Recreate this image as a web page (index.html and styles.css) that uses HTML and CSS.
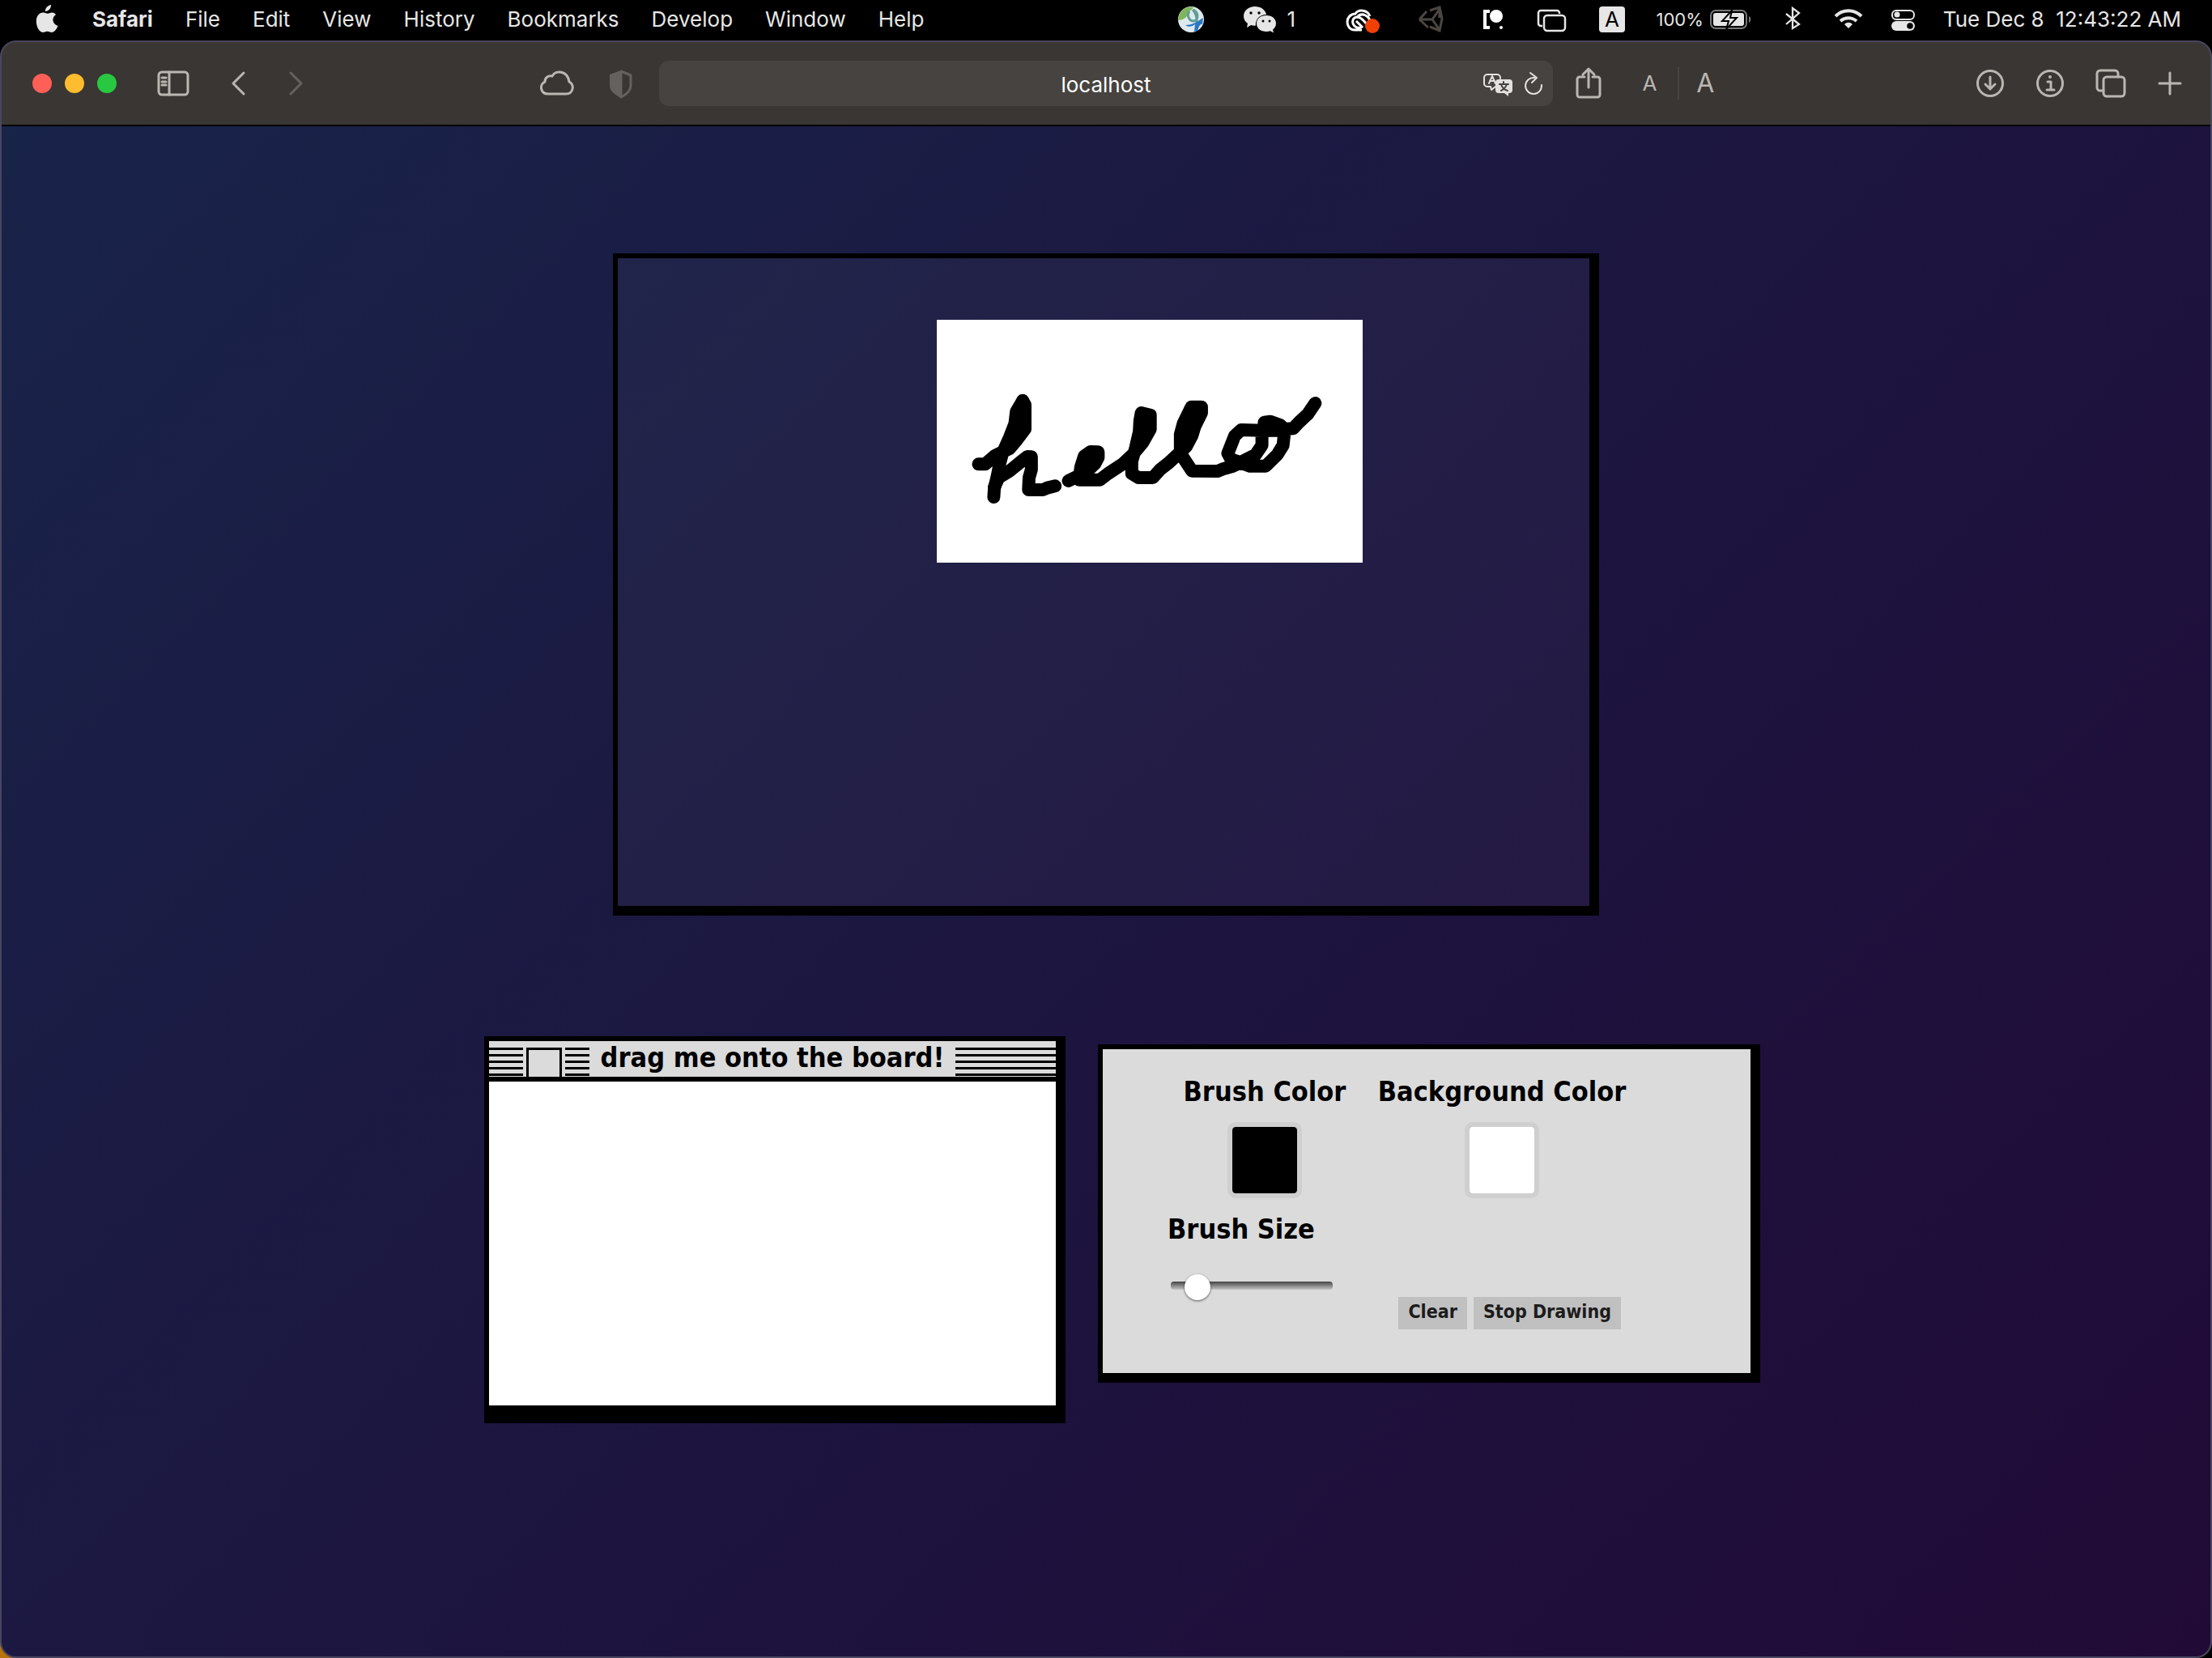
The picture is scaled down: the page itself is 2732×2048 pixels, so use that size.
FILE: index.html
```html
<!DOCTYPE html>
<html lang="en">
<head>
<meta charset="utf-8">
<title>localhost</title>
<meta name="viewport" content="width=device-width, initial-scale=1">
<link rel="stylesheet" href="styles.css">
</head>
<body>
<header class="menubar">
  <nav class="menus">
    <svg class="apple" width="28" height="36" viewBox="0 0 28 36"><path d="M19 0c.4 4-3 8-7 8-.4-4 3.200-7.400 7-8zM25 12c-6 4-4 12 2.500 14-1.500 4-4.500 8-7.500 8-2.200 0-3-1.300-5.500-1.300S11 34 9 34C4 34 0 25 1 18c.8-6 5-9 9-8.500 2 .2 3 1.300 4.800 1.300S18 9.500 20 9.500c2 0 3.800.8 5 2.500z"/></svg>
    <button class="strong">Safari</button>
    <button>File</button>
    <button>Edit</button>
    <button>View</button>
    <button>History</button>
    <button>Bookmarks</button>
    <button>Develop</button>
    <button>Window</button>
    <button>Help</button>
  </nav>
  <div class="status">
    <svg width="56" height="48" viewBox="0 0 56 48"><circle cx="28" cy="24" r="16" fill="#dfe8ee"/><path d="M13 20C16 10 25 7 31 9c-2 4-5 4-8 8 2 3-4 8-11 8z" fill="#7fb65b"/><path d="M26 14c-4 5 0 12 5 12s8-9 0-14M30 12c5 4 6 12 5 24" fill="none" stroke="#5f9f95" stroke-width="3"/><path d="M21 31c8 0 13-3 22-9l-1 8c-3-1-4 3-6 8l-4 1 1-9c-4 3-8 4-12 1z" fill="#2678c4"/></svg>
    <span class="chat"><svg width="42" height="48" viewBox="0 0 42 48" fill="#e6e6e6"><path d="M15 8C7 8 1 13 1 20c0 4 2 7 5 9l-1 5 5-3c2 .6 4 .8 6 .6C15 25 20 18 29 18 28 12 22 8 15 8z"/><path d="M29 19c-7 0-12 4-12 10s5 10 12 10c2 0 3-.3 5-.8l4 2.300-1-4c2-1.500 4-4 4-7.500 0-6-5-10-12-10z"/><g fill="#000"><circle cx="10" cy="16" r="1.700"/><circle cx="20" cy="16" r="1.700"/><circle cx="25" cy="26" r="1.500"/><circle cx="33" cy="26" r="1.500"/></g></svg>1</span>
    <svg width="60" height="48" viewBox="0 0 60 48" fill="none" stroke="#fff" stroke-width="3"><path d="M29 37h-9c-6 0-9-5-9-10s4-10 10-10c4-6 15-5 18 3M30 33c-12 6-17-11-7-12 6 0 9 6 14 11M22 26l8 8M24 20c6-5 13 0 15 5"/><circle cx="42" cy="32" r="9" fill="#f04005" stroke="none"/></svg>
    <svg width="44" height="48" viewBox="0 0 44 48" fill="none" stroke="#4b4642" stroke-width="3"><path d="M8 24L17 14M33 10v12M21 13l12-4 3 14-3 15-12-5M8 24l11 10M10 24h14l9-13M24 24l9 13"/></svg>
    <svg width="44" height="48" viewBox="0 0 44 48"><path d="M19 14h-6v20h6" fill="none" stroke="#fff" stroke-width="4"/><circle cx="27" cy="20" r="8" fill="#fff"/><circle cx="33" cy="34" r="2" fill="#fff"/></svg>
    <svg width="40" height="48" viewBox="0 0 40 48" fill="none" stroke="#e6e6e6" stroke-width="2.500"><path d="M8 32H6a3 3 0 0 1-3-3V16a3 3 0 0 1 3-3h20a3 3 0 0 1 3 3v1"/><rect x="10" y="19" width="26" height="19" rx="4"/></svg>
    <svg width="44" height="48" viewBox="0 0 44 48"><rect x="6" y="8" width="32" height="32" rx="4" fill="#e6e6e6"/><text x="22" y="33" class="glyph" text-anchor="middle">A</text></svg>
    <span class="battery">100%<svg width="52" height="48" viewBox="0 0 52 48"><rect x="1" y="13" width="44" height="22" rx="6" fill="none" stroke="#777" stroke-width="2"/><path d="M48 20c3 1 3 7 0 8z" fill="#777"/><rect x="4" y="16" width="38" height="16" rx="3" fill="#e6e6e6"/><path d="M27 13L15 26h8l-3 10 13-14h-8z" fill="#e6e6e6" stroke="#000" stroke-width="2"/></svg></span>
    <svg width="36" height="48" viewBox="0 0 36 48" fill="none" stroke="#e6e6e6" stroke-width="2.300"><path d="M10 17l16 13-8 5V10l8 6-16 14"/></svg>
    <svg width="38" height="48" viewBox="0 0 38 48" fill="none" stroke="#e6e6e6" stroke-width="4"><path d="M3 20c9-9 23-9 32 0M9 26c6-5 14-5 20 0"/><path d="M19 35l-5-5c3-3 7-3 10 0z" fill="#e6e6e6" stroke="none"/></svg>
    <svg width="34" height="48" viewBox="0 0 34 48"><rect x="3" y="13" width="27" height="11" rx="5" fill="none" stroke="#e6e6e6" stroke-width="2"/><circle cx="9" cy="18" r="3.500" fill="#e6e6e6"/><rect x="2" y="26" width="29" height="12" rx="6" fill="#e6e6e6"/><circle cx="25" cy="32" r="3.800" fill="#000"/></svg>
    <time class="clock">Tue Dec 8&nbsp; 12:43:22 AM</time>
  </div>
</header>

<div class="window">
  <div class="toolbar">
    <div class="side">
      <div class="lights">
        <button class="light red" aria-label="Close"></button>
        <button class="light yellow" aria-label="Minimize"></button>
        <button class="light green" aria-label="Zoom"></button>
      </div>
      <button class="tool" aria-label="Sidebar"><svg width="40" height="40" viewBox="0 0 40 40"><rect x="2" y="6" width="36" height="28" rx="4"/><path d="M15 6v28M6 13h5M6 18h5M6 22h5"/></svg></button>
      <div class="history">
        <button class="tool" aria-label="Back"><svg width="20" height="40" viewBox="0 0 20 40"><path d="M17 7L4 20l13 13"/></svg></button>
        <button class="tool dim" aria-label="Forward"><svg width="20" height="40" viewBox="0 0 20 40"><path d="M3 7l13 13L3 33"/></svg></button>
      </div>
      <div class="site">
        <button class="tool" aria-label="iCloud tabs"><svg width="44" height="40" viewBox="0 0 44 40"><path d="M11 33c-10 0-11-12-4-15 0-5 4-8 9-7C20 3 35 4 37 18c7 4 5 15-4 15z"/></svg></button>
        <button class="tool dim" aria-label="Privacy report"><svg width="30" height="40" viewBox="0 0 30 40"><path d="M15 5l12 5v13c0 6-6 11-12 14z"/><path class="solid" d="M15 4L1 9v14c0 7 8 12 14 15z"/></svg></button>
      </div>
    </div>
    <div class="address">
      <input class="url" type="text" value="localhost" aria-label="Address">
      <div class="address-tools">
        <button class="tool bright" aria-label="Translate"><svg width="40" height="40" viewBox="0 0 40 40"><path d="M17 24l-5 4-1-4H7a4 4 0 0 1-4-4v-7a4 4 0 0 1 4-4h12a4 4 0 0 1 4 4v1M9 20l4-9 4 9M10 17h6"/><path class="solid" d="M21 15h13a4 4 0 0 1 4 4v9a4 4 0 0 1-4 4h-1v4l-5-4h-7a4 4 0 0 1-4-4v-9a4 4 0 0 1 4-4z"/><path stroke="#474340" d="M22 21h11M27 18v3M24 29c4-2 6-5 7-8M24 21c1 4 4 7 8 8"/></svg></button>
        <button class="tool bright" aria-label="Reload"><svg width="24" height="40" viewBox="0 0 24 40"><path d="M13 13a10 10 0 1 0 9 9M8 7l8 6-6 6"/></svg></button>
      </div>
    </div>
    <div class="side end">
      <button class="tool" aria-label="Share"><svg width="32" height="40" viewBox="0 0 32 40"><path d="M11 12H5a3 3 0 0 0-3 3v19a3 3 0 0 0 3 3h22a3 3 0 0 0 3-3V15a3 3 0 0 0-3-3h-6M16 25V3M9 9l7-7 7 7"/></svg></button>
      <div class="zoom">
        <button class="small">A</button>
        <button class="big">A</button>
      </div>
      <div class="actions">
        <button class="tool" aria-label="Downloads"><svg width="36" height="40" viewBox="0 0 36 40"><circle cx="18" cy="20" r="15.500"/><path d="M18 12v15M12 21l6 6 6-6"/></svg></button>
        <button class="tool" aria-label="Info"><svg width="36" height="40" viewBox="0 0 36 40"><circle cx="18" cy="20" r="15.500"/><path d="M15 18h4v10M14 28h9"/><circle class="solid" cx="18" cy="12" r="2"/></svg></button>
        <button class="tool" aria-label="Tab overview"><svg width="38" height="40" viewBox="0 0 38 40"><path d="M10 29H6a4 4 0 0 1-4-4V8a4 4 0 0 1 4-4h18a4 4 0 0 1 4 4v4"/><rect x="10" y="12" width="26" height="24" rx="4"/></svg></button>
        <button class="tool" aria-label="New tab"><svg width="32" height="40" viewBox="0 0 32 40"><path d="M16 7v26M3 20h26"/></svg></button>
      </div>
    </div>
  </div>

  <main class="page">
    <section class="board" aria-label="Board">
      <svg class="drawing" role="img" aria-label="hello" viewBox="0 0 526 300">
        <rect width="526" height="300" fill="#fff"/>
        <g transform="scale(.3573 .3333) translate(-48 -45)" fill="none" stroke="#000" stroke-width="16" stroke-linecap="round" stroke-linejoin="round">
          <path class="ink" d="M192 580L215 580L250 548L300 522L325 490L353 450L353 360L345 344L337 360L323 385L318 430L300 480L275 540L265 580L258 620L247 670L245 702"/>
          <path class="ink" d="M247 665L262 630L300 605L340 570L362 552L375 553L375 600L367 630L365 675L415 675L430 668L457 661"/>
          <path class="ink" d="M503 642L540 622L575 598L595 578L606 555L606 535L580 534L558 550L546 590L540 638L612 638L640 615L690 580L725 545L760 500L786 450L786 398L755 390L750 420L748 460L735 520L722 570L722 615L745 630L795 630L820 600L850 575L880 545L910 515L930 475L940 440L963 390L963 368L928 368L900 430L890 470L890 540L930 605L1020 606L1040 597L1070 588L1110 567L1150 545L1172 510L1172 455L1100 453L1078 475L1054 540L1065 562L1100 575L1130 587L1185 587L1225 545L1245 510L1250 460L1235 435L1200 422L1180 425L1180 455L1280 448L1300 425L1330 395L1356 354"/>
          <path class="ink" fill="#000" d="M340 365V450L320 480ZM766 405L770 450L750 490ZM935 385L945 390L915 450ZM1185 430L1240 440V455H1185Z"/>
        </g>
      </svg>
    </section>

    <div class="tools">
      <section class="sketch">
        <div class="titlebar">
          <span class="lines first"></span>
          <button class="closebox" aria-label="Close"></button>
          <span class="lines second"></span>
          <h2 class="title">drag me onto the board!</h2>
          <span class="lines rest"></span>
        </div>
        <canvas class="canvas"></canvas>
      </section>

      <form class="controls">
        <div class="colors">
          <label class="name" for="brush">Brush Color</label>
          <label class="name" for="back">Background Color</label>
          <input class="swatch" id="brush" type="color" value="#000000">
          <input class="swatch" id="back" type="color" value="#ffffff">
        </div>
        <div class="options">
          <div class="size">
            <label class="name" for="size">Brush Size</label>
            <input class="slider" id="size" type="range" min="0" max="100" value="10">
          </div>
          <div class="buttons">
            <button class="action" type="button">Clear</button>
            <button class="action" type="button">Stop Drawing</button>
          </div>
        </div>
      </form>
    </div>
  </main>
</div>
</body>
</html>
```
FILE: styles.css
```css
* { box-sizing: border-box; }

body {
  margin: 0;
  min-height: 100vh;
  display: flex;
  flex-direction: column;
  background: #000 linear-gradient(90deg, #b87408 40px, transparent 40px) 0 100% / 100% 40px no-repeat;
  font-family: Inter, "Liberation Sans", sans-serif;
  font-size: 26px;
  color: #e6e6e6;
}

button {
  margin: 0;
  padding: 0;
  border: 0;
  background: none;
  color: inherit;
  font: inherit;
}

svg { display: block; flex: none; }

/* System menu bar */
.menubar {
  height: 50px;
  padding: 0 38px 0 44px;
  display: flex;
  justify-content: space-between;
  align-items: flex-start;
  line-height: 48px;
  white-space: nowrap;
}
.menus { display: flex; gap: 40px; }
.apple { margin: 6px 2px 0 0; fill: #e6e6e6; }
.menus .strong { font-weight: 700; }
.status { display: flex; gap: 32px; }
.glyph { font-size: 26px; fill: #000; }
.chat { width: 90px; padding-left: 4px; display: flex; gap: 12px; }
.battery { display: flex; gap: 8px; font-size: 22px; }

/* Browser window */
.window {
  flex: 1;
  display: flex;
  flex-direction: column;
  border: 2px solid #4a4660;
  border-radius: 20px;
  overflow: hidden;
  background: linear-gradient(135deg, #182449, #1b1a43 35%, #1d123d 65%, #210a36);
}
.toolbar {
  height: 106px;
  margin: -2px -2px 0;
  border: 2px solid #6b6866;
  border-bottom-color: #000;
  border-radius: 20px 20px 0 0;
  display: grid;
  grid-template-columns: 1fr 40.500% 1fr;
  align-items: center;
  background: #3a3633;
  color: #bab6b2;
}
.side { display: flex; align-items: center; padding-left: 38px; }
.lights { display: flex; gap: 16px; margin-right: 50px; }
.light { width: 24px; height: 24px; border-radius: 50%; }
.red { background: #ff5f57; }
.yellow { background: #febc2e; }
.green { background: #28c840; }
.tool svg { fill: none; stroke: currentColor; stroke-width: 3; stroke-linecap: round; stroke-linejoin: round; }
.tool .solid { fill: currentColor; stroke: none; }
.dim { color: #65615e; }
.bright { color: #e3e1df; }
.tool.bright svg { stroke-width: 2; }
.history { display: flex; gap: 52px; margin-left: 50px; }
.site { display: flex; gap: 42px; margin-left: auto; padding-right: 32px; }
.address {
  height: 56px;
  padding: 0 12px;
  display: grid;
  grid-template-columns: 80px 1fr 80px;
  align-items: center;
  border-radius: 12px;
  background: #474340;
}
.url {
  grid-column: 2;
  width: 100%;
  padding: 2px 0 0;
  border: 0;
  background: none;
  color: #fff;
  font: inherit;
  text-align: center;
}
.address-tools { display: flex; justify-content: flex-end; gap: 12px; }
.end { padding: 0 34px 0 28px; }
.zoom { display: flex; align-items: center; margin-left: 24px; line-height: 40px; }
.small { width: 72px; font-size: 26px; border-right: 2px solid #484441; }
.big { width: 64px; font-size: 32px; }
.actions { display: flex; gap: 38px; margin-left: auto; }

/* Drawing page */
.page {
  flex: 1;
  padding: 157px 40px;
  display: flex;
  flex-direction: column;
  align-items: center;
  gap: 149px;
  font-family: "DejaVu Sans Condensed", "DejaVu Sans", sans-serif;
  font-weight: 700;
  color: #000;
}
.board {
  width: 1218px;
  height: 818px;
  max-width: 100%;
  padding: 76px 0 0 394px;
  border: 6px solid #000;
  border-right-width: 12px;
  border-bottom-width: 12px;
  background: rgba(255, 255, 255, 0.03);
}
.drawing { width: 526px; height: 300px; }
.ink { vector-effect: non-scaling-stroke; }

.tools { display: flex; align-items: flex-start; gap: 40px; padding-left: 40px; }
.sketch {
  width: 718px;
  border: 6px solid #000;
  border-right-width: 12px;
  border-bottom-width: 22px;
  background: #fff;
}
.titlebar {
  height: 50px;
  display: flex;
  align-items: flex-end;
  border-bottom: 6px solid #000;
  background: #dbdbdb;
}
.lines {
  height: 36px;
  background: repeating-linear-gradient(#000 0 3px, transparent 3px 8px);
}
.first { width: 42px; }
.second { width: 30px; }
.rest { flex: 1; }
.closebox {
  width: 44px;
  height: 36px;
  margin: 0 4px;
  border: 3px solid #000;
  border-bottom: 0;
}
.title {
  width: 452px;
  margin: 0;
  padding-bottom: 4px;
  font-size: 34px;
  line-height: 40px;
  text-align: center;
  white-space: nowrap;
}
.canvas { display: block; width: 100%; height: 400px; }

.controls {
  width: 818px;
  height: 418px;
  margin-top: 10px;
  padding: 32px 80px;
  border: 6px solid #000;
  border-right-width: 12px;
  border-bottom-width: 12px;
  background: #dbdbdb;
}
.colors {
  display: grid;
  grid-template-columns: 200px 306px;
  column-gap: 40px;
  row-gap: 18px;
  justify-items: center;
  padding-left: 20px;
}
.name { font-size: 34px; line-height: 40px; white-space: nowrap; }
.swatch {
  appearance: none;
  width: 92px;
  height: 94px;
  padding: 0;
  border: 6px solid #cfcfcf;
  border-radius: 10px;
  background: none;
}
.swatch::-webkit-color-swatch-wrapper { padding: 0; }
.swatch::-webkit-color-swatch { border: 0; border-radius: 4px; }
.options { display: flex; justify-content: space-between; padding: 18px 80px 0 0; }
.size { display: flex; flex-direction: column; gap: 34px; }
.slider {
  appearance: none;
  width: 200px;
  height: 32px;
  margin: 0 4px;
  background: none;
}
.slider::-webkit-slider-runnable-track {
  height: 10px;
  border-radius: 4px;
  background: linear-gradient(#444, #c4c4c4);
}
.slider::-webkit-slider-thumb {
  appearance: none;
  width: 32px;
  height: 32px;
  margin-top: -9px;
  border-radius: 50%;
  background: #fff;
  box-shadow: 0 1px 3px rgba(0, 0, 0, 0.6);
}
.buttons { display: flex; gap: 8px; padding-top: 104px; }
.action {
  height: 40px;
  padding: 0 12px 4px;
  background: #c0c0c0;
  color: #1c1c1c;
  font-size: 23px;
  white-space: nowrap;
}
```
